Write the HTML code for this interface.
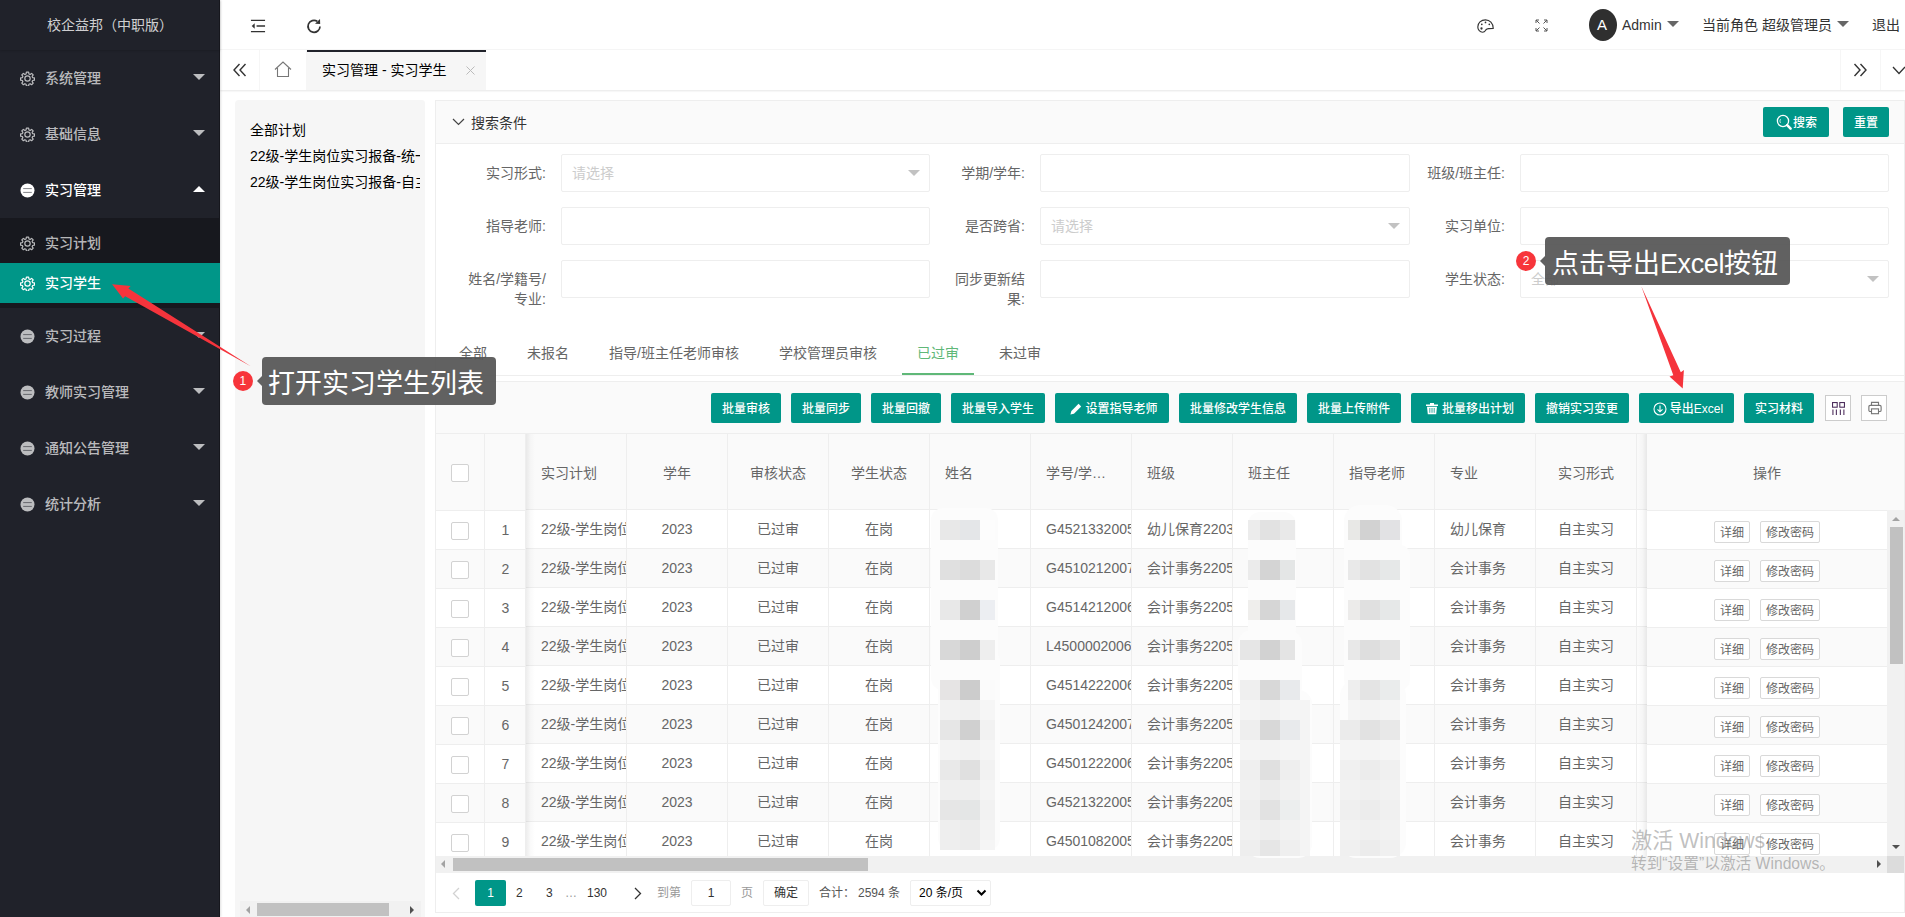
<!DOCTYPE html>
<html lang="zh-CN">
<head>
<meta charset="utf-8">
<title>校企益邦（中职版）</title>
<style>
*{box-sizing:border-box;margin:0;padding:0}
html,body{width:1905px;height:917px;overflow:hidden;background:#fff}
body{font-family:"Liberation Sans","Noto Sans CJK SC",sans-serif;font-size:14px;color:#666;position:relative;line-height:1}
.abs{position:absolute}
svg{display:block}
/* sidebar */
#side{position:absolute;left:0;top:0;width:220px;height:917px;background:#20222a;box-shadow:inset -1px 0 0 rgba(0,0,0,.3),1px 0 2px rgba(0,0,0,.12);z-index:2;color:rgba(255,255,255,.7)}
#logo{position:absolute;left:0;top:0;width:220px;height:50px;line-height:50px;text-align:center;color:rgba(255,255,255,.8);font-size:14px;box-shadow:0 1px 2px 0 rgba(0,0,0,.15)}
.mi{position:absolute;left:0;width:220px;height:56px;line-height:56px;font-size:14px;color:rgba(255,255,255,.7)}
.mi .t{position:absolute;left:45px;top:0;font-weight:500}
.mi svg.ic{position:absolute;left:20px;top:21px}
.mi .car{position:absolute;left:193px;top:24px;width:0;height:0;border:6px solid transparent;border-top-color:rgba(255,255,255,.7);border-bottom-width:0}
.mi.open{color:#fff}
.mi.open .car{border-top-width:0;border-bottom:6px solid #fff;top:24px}
#sub{position:absolute;left:0;top:218px;width:220px;height:90px;background:#17181e}
.si{position:absolute;left:0;width:220px;height:40px;line-height:40px;color:rgba(255,255,255,.7)}
.si .t{position:absolute;left:45px;top:0;font-weight:500}
.si svg.ic{position:absolute;left:20px;top:13px}
.si.on{background:#009688;color:#fff}
/* header */
#hdr{position:absolute;left:220px;top:0;width:1685px;height:50px;background:#fff;border-bottom:1px solid #f6f6f6;color:#333}
#hdr .txt{position:absolute;top:0;line-height:50px;font-size:14px;color:#333;white-space:nowrap}
.dcar{position:absolute;width:0;height:0;border:6px solid transparent;border-top-color:#666;border-bottom-width:0}
/* tab bar */
#tabs{position:absolute;left:220px;top:50px;width:1685px;height:40px;background:#fff;box-shadow:0 1px 2px 0 rgba(0,0,0,.1)}
#tabs .cell{position:absolute;top:0;height:40px;border-right:1px solid #f6f6f6}
#tabs .act{position:absolute;left:87px;top:0;width:179px;height:40px;background:#f6f6f6;border-top:2px solid #20222a;color:#000;line-height:36px;font-size:14px}

/* tree */
#tree{position:absolute;left:235px;top:100px;width:190px;height:830px;background:#f6f6f6;border-radius:4px;overflow:hidden;color:#000}
#tree .n{position:absolute;left:15px;white-space:nowrap;font-size:14px;line-height:26px;color:#000}
/* search panel */
#sp{position:absolute;left:435px;top:100px;width:1470px;height:813px;border:1px solid #eee;background:#fff}
#sph{position:absolute;left:0;top:0;width:1468px;height:43px;background:#fafafa;border-bottom:1px solid #eee;line-height:42px;color:#333}
.btn{position:absolute;height:30px;line-height:32px;background:#009688;color:#fff;font-size:12px;border-radius:2px;text-align:center;white-space:nowrap;font-weight:500}
.lab{position:absolute;width:110px;text-align:right;padding-right:15px;line-height:20px;color:#666;font-size:14px}
.inp{position:absolute;height:38px;border:1px solid #eee;border-radius:2px;background:#fff;line-height:36px;padding-left:10px;color:#ccc;font-size:14px}
.inp i{position:absolute;right:9px;top:15px;width:0;height:0;border:6px solid transparent;border-top-color:#c2c2c2;border-bottom-width:0}
.tb{position:absolute;top:335px;height:40px;line-height:36px;font-size:14px;color:#666;white-space:nowrap}

/* table */
#tv{position:absolute;left:0;top:280px;width:1468px;height:492px;border-top:1px solid #eee;background:#fff}
#tool{position:absolute;left:0;top:0;width:1468px;height:52px;background:#fafafa;border-bottom:1px solid #eee}
#tool .btn{top:11px}
.tib{position:absolute;top:13px;width:26px;height:26px;border:1px solid #ccc;background:#fff}
#th{position:absolute;left:0;top:52px;width:1468px;height:76px;background:#fafafa;border-bottom:1px solid #eee}
.hc{position:absolute;top:0;height:76px;border-right:1px solid #eee;line-height:78px;color:#666;font-size:14px;white-space:nowrap;overflow:hidden}
.row{position:absolute;left:0;width:1452px;height:39px;border-bottom:1px solid #eee;background:#fff}
.row.alt{background:#fafafa}
.c{position:absolute;top:0;height:38px;line-height:38px;border-right:1px solid #eee;color:#666;font-size:14px;white-space:nowrap;overflow:hidden}
.c.ctr,.hc.ctr{text-align:center}
.c.l,.hc.l{padding-left:15px}
.cb{position:absolute;left:15px;width:18px;height:18px;border:1px solid #d2d2d2;border-radius:2px;background:#fff}
.xb{position:absolute;top:10px;height:22px;line-height:22px;border:1px solid #d9d9d9;border-radius:2px;background:#fff;color:#666;font-size:12px;text-align:center}
.mz{position:absolute;background:#fff}
.pg{position:absolute;top:0;line-height:26px;font-size:12px;color:#333;white-space:nowrap}
</style>
</head>
<body>
<div id="side">
<div id="logo">校企益邦（中职版）</div>
<div class="mi" style="top:50px"><svg class="ic" width="15" height="15" viewBox="0 0 24 24" fill="none" stroke="currentColor" stroke-width="1.9" stroke-linejoin="round"><circle cx="12" cy="12" r="4.3"/><path d="M10.2 1.8h3.6l.5 2.9 1.9.8 2.4-1.7 2.5 2.5-1.7 2.4.8 1.9 2.9.5v3.6l-2.9.5-.8 1.9 1.7 2.4-2.5 2.5-2.4-1.7-1.9.8-.5 2.9h-3.6l-.5-2.9-1.9-.8-2.4 1.7-2.5-2.5 1.7-2.4-.8-1.9-2.9-.5v-3.6l2.9-.5.8-1.9-1.7-2.4 2.5-2.5 2.4 1.7 1.9-.8z"/></svg><span class="t">系统管理</span><i class="car"></i></div>
<div class="mi" style="top:106px"><svg class="ic" width="15" height="15" viewBox="0 0 24 24" fill="none" stroke="currentColor" stroke-width="1.9" stroke-linejoin="round"><circle cx="12" cy="12" r="4.3"/><path d="M10.2 1.8h3.6l.5 2.9 1.9.8 2.4-1.7 2.5 2.5-1.7 2.4.8 1.9 2.9.5v3.6l-2.9.5-.8 1.9 1.7 2.4-2.5 2.5-2.4-1.7-1.9.8-.5 2.9h-3.6l-.5-2.9-1.9-.8-2.4 1.7-2.5-2.5 1.7-2.4-.8-1.9-2.9-.5v-3.6l2.9-.5.8-1.9-1.7-2.4 2.5-2.5 2.4 1.7 1.9-.8z"/></svg><span class="t">基础信息</span><i class="car"></i></div>
<div class="mi open" style="top:162px"><svg class="ic" width="15" height="15" viewBox="0 0 15 15"><circle cx="7.5" cy="7.5" r="7" fill="currentColor"/><path d="M3.2 5.6h8.6M3.2 9.4h8.6" stroke="#20222a" stroke-width="1" opacity=".55"/></svg><span class="t">实习管理</span><i class="car"></i></div>
<div class="mi" style="top:308px"><svg class="ic" width="15" height="15" viewBox="0 0 15 15"><circle cx="7.5" cy="7.5" r="7" fill="currentColor"/><path d="M3.2 5.6h8.6M3.2 9.4h8.6" stroke="#20222a" stroke-width="1" opacity=".55"/></svg><span class="t">实习过程</span><i class="car"></i></div>
<div class="mi" style="top:364px"><svg class="ic" width="15" height="15" viewBox="0 0 15 15"><circle cx="7.5" cy="7.5" r="7" fill="currentColor"/><path d="M3.2 5.6h8.6M3.2 9.4h8.6" stroke="#20222a" stroke-width="1" opacity=".55"/></svg><span class="t">教师实习管理</span><i class="car"></i></div>
<div class="mi" style="top:420px"><svg class="ic" width="15" height="15" viewBox="0 0 15 15"><circle cx="7.5" cy="7.5" r="7" fill="currentColor"/><path d="M3.2 5.6h8.6M3.2 9.4h8.6" stroke="#20222a" stroke-width="1" opacity=".55"/></svg><span class="t">通知公告管理</span><i class="car"></i></div>
<div class="mi" style="top:476px"><svg class="ic" width="15" height="15" viewBox="0 0 15 15"><circle cx="7.5" cy="7.5" r="7" fill="currentColor"/><path d="M3.2 5.6h8.6M3.2 9.4h8.6" stroke="#20222a" stroke-width="1" opacity=".55"/></svg><span class="t">统计分析</span><i class="car"></i></div>
<div id="sub"><div class="si" style="top:5px"><svg class="ic" width="15" height="15" viewBox="0 0 24 24" fill="none" stroke="currentColor" stroke-width="1.9" stroke-linejoin="round"><circle cx="12" cy="12" r="4.3"/><path d="M10.2 1.8h3.6l.5 2.9 1.9.8 2.4-1.7 2.5 2.5-1.7 2.4.8 1.9 2.9.5v3.6l-2.9.5-.8 1.9 1.7 2.4-2.5 2.5-2.4-1.7-1.9.8-.5 2.9h-3.6l-.5-2.9-1.9-.8-2.4 1.7-2.5-2.5 1.7-2.4-.8-1.9-2.9-.5v-3.6l2.9-.5.8-1.9-1.7-2.4 2.5-2.5 2.4 1.7 1.9-.8z"/></svg><span class="t">实习计划</span></div><div class="si on" style="top:45px"><svg class="ic" width="15" height="15" viewBox="0 0 24 24" fill="none" stroke="currentColor" stroke-width="1.9" stroke-linejoin="round"><circle cx="12" cy="12" r="4.3"/><path d="M10.2 1.8h3.6l.5 2.9 1.9.8 2.4-1.7 2.5 2.5-1.7 2.4.8 1.9 2.9.5v3.6l-2.9.5-.8 1.9 1.7 2.4-2.5 2.5-2.4-1.7-1.9.8-.5 2.9h-3.6l-.5-2.9-1.9-.8-2.4 1.7-2.5-2.5 1.7-2.4-.8-1.9-2.9-.5v-3.6l2.9-.5.8-1.9-1.7-2.4 2.5-2.5 2.4 1.7 1.9-.8z"/></svg><span class="t">实习学生</span></div></div>
</div>
<div id="hdr">
<svg class="abs" style="left:30px;top:18px" width="16" height="16" viewBox="0 0 17 16" fill="none" stroke="#333" stroke-width="1.45"><path d="M1 2h15M7 8h9M1 14h15"/><path d="M5 5.2L1.8 8 5 10.8z" fill="#333" stroke="none"/></svg>
<svg class="abs" style="left:86px;top:18px" width="16" height="16" viewBox="0 0 16 16" fill="none" stroke="#333" stroke-width="1.7"><path d="M14 8.4A6 6 0 1 1 11.3 3.3"/><path d="M9 5.800l5.200.3-.2-5.200z" fill="#333" stroke="none"/></svg>
<svg class="abs" style="left:1257px;top:19px" width="17" height="14" viewBox="0 0 17 14" fill="none" stroke="#333" stroke-width="1.150"><path d="M16.200 9.300C16.200 4.400 12.700.800 8.500.800 4 .800.800 3.900.800 7.900c0 3 2.200 5.300 4.800 5.300 2.500 0 2.600-1.700 3.600-2.700 1-1 2.800-1.200 7-1.200z"/><circle cx="4.500" cy="9.500" r="1.150" fill="#333" stroke="none"/><circle cx="4.800" cy="5.300" r=".85" fill="#333" stroke="none"/><circle cx="8.500" cy="3.400" r=".85" fill="#333" stroke="none"/><circle cx="12.300" cy="5.300" r=".85" fill="#333" stroke="none"/></svg>
<svg class="abs" style="left:1315px;top:19px" width="13" height="13" viewBox="0 0 13 13" fill="none" stroke="#555" stroke-width="1"><path d="M1 4V1h3M1 1l3.500 3.500M9 1h3v3M12 1L8.500 4.500M1 9v3h3M1 12l3.500-3.500M12 9v3H9M12 12L8.500 8.500"/></svg>
<div class="abs" style="left:1369px;top:9px;width:28px;height:32px;border-radius:50%;background:#2f2f2f;color:#fff;text-align:center;line-height:32px;font-size:15px;padding-right:2px">A</div>
<span class="txt" style="left:1402px">Admin</span><i class="dcar" style="left:1447px;top:21px"></i>
<span class="txt" style="left:1482px">当前角色 超级管理员</span><i class="dcar" style="left:1617px;top:21px"></i>
<span class="txt" style="left:1652px">退出</span>
</div>
<div id="tabs">
<div class="cell" style="left:0;width:40px"></div><div class="cell" style="left:40px;width:47px"></div>
<svg class="abs" style="left:13px;top:13px" width="14" height="14" viewBox="0 0 14 14" fill="none" stroke="#333" stroke-width="1.400"><path d="M6.500 1L1 7l5.500 6M12.500 1L7 7l5.500 6"/></svg>
<svg class="abs" style="left:54px;top:11px" width="18" height="17" viewBox="0 0 18 17" fill="none" stroke="#777" stroke-width="1.100"><path d="M1 8.500L9 1l8 7.500M3.500 7v8.500h11V7"/></svg>
<div class="act"><span class="abs" style="left:15px;top:0;white-space:nowrap">实习管理 - 实习学生</span><svg class="abs" style="left:159px;top:14px" width="9" height="9" viewBox="0 0 9 9" stroke="#bbb" stroke-width="1" fill="none"><path d="M.500.500l8 8M8.500.500l-8 8"/></svg></div>
<div class="abs" style="left:1620px;top:0;width:1px;height:40px;background:#f6f6f6"></div><div class="abs" style="left:1660px;top:0;width:1px;height:40px;background:#f6f6f6"></div>
<svg class="abs" style="left:1633px;top:13px" width="14" height="14" viewBox="0 0 14 14" fill="none" stroke="#333" stroke-width="1.400"><path d="M1.500 1L7 7l-5.500 6M7.500 1L13 7l-5.500 6"/></svg>
<svg class="abs" style="left:1672px;top:16px" width="14" height="9" viewBox="0 0 14 9" fill="none" stroke="#333" stroke-width="1.300"><path d="M1 1l6 6.500L13 1"/></svg>
</div>
<div id="tree">
<div class="n" style="top:17px">全部计划</div><div class="n" style="top:43px">22级-学生岗位实习报备-统一</div><div class="n" style="top:69px">22级-学生岗位实习报备-自主</div><div class="abs" style="left:185px;top:0;width:5px;height:830px;background:#f6f6f6"></div><div class="abs" style="left:5px;top:801px;width:181px;height:17px;background:#f1f1f1"></div><div class="abs" style="left:22px;top:803px;width:132px;height:13px;background:#c1c1c1"></div><div class="abs" style="left:11px;top:806px;width:0;height:0;border:4px solid transparent;border-right:4px solid #a3a3a3;border-left-width:0"></div><div class="abs" style="left:175px;top:806px;width:0;height:0;border:4px solid transparent;border-left:4px solid #505050;border-right-width:0"></div></div>
<div id="sp">
<div id="sph"><svg class="abs" style="left:16px;top:17px" width="13" height="8" viewBox="0 0 13 8" fill="none" stroke="#444" stroke-width="1.200"><path d="M1 1l5.500 5.500L12 1"/></svg><span class="abs" style="left:35px;top:1px;font-size:14px;color:#333">搜索条件</span><div class="btn" style="left:1327px;top:6px;width:66px"><svg class="abs" style="left:13px;top:7px" width="16" height="16" viewBox="0 0 16 16" fill="none" stroke="#fff" stroke-width="1.300"><circle cx="7" cy="7" r="5.600"/><path d="M4.500 8.900a3.300 3.300 0 0 1 0-3.800" stroke-width=".9" opacity=".85"/><path d="M11.200 11.200l3.400 3.400" stroke-width="2.500" stroke-linecap="round"/></svg><span style="padding-left:18px">搜索</span></div><div class="btn" style="left:1407px;top:6px;width:46px">重置</div></div>
<div class="lab" style="left:15px;top:62px">实习形式:</div><div class="inp" style="left:125px;top:53px;width:369px">请选择<i></i></div><div class="lab" style="left:494px;top:62px">学期/学年:</div><div class="inp" style="left:604px;top:53px;width:370px"></div><div class="lab" style="left:974px;top:62px">班级/班主任:</div><div class="inp" style="left:1084px;top:53px;width:369px"></div>
<div class="lab" style="left:15px;top:115px">指导老师:</div><div class="inp" style="left:125px;top:106px;width:369px"></div><div class="lab" style="left:494px;top:115px">是否跨省:</div><div class="inp" style="left:604px;top:106px;width:370px">请选择<i></i></div><div class="lab" style="left:974px;top:115px">实习单位:</div><div class="inp" style="left:1084px;top:106px;width:369px"></div>
<div class="lab" style="left:15px;top:168px">姓名/学籍号/<br>专业:</div><div class="inp" style="left:125px;top:159px;width:369px"></div><div class="lab" style="left:494px;top:168px">同步更新结<br>果:</div><div class="inp" style="left:604px;top:159px;width:370px"></div><div class="lab" style="left:974px;top:168px">学生状态:</div><div class="inp" style="left:1084px;top:159px;width:369px">全部<i></i></div>
<div class="abs" style="left:3px;top:274px;width:1465px;height:1px;background:#eee"></div><span class="tb" style="left:23px;top:234px">全部</span><span class="tb" style="left:91px;top:234px">未报名</span><span class="tb" style="left:173px;top:234px">指导/班主任老师审核</span><span class="tb" style="left:343px;top:234px">学校管理员审核</span><span class="tb" style="left:481px;top:234px;color:#5fb878">已过审</span><span class="tb" style="left:563px;top:234px">未过审</span><div class="abs" style="left:466px;top:272px;width:72px;height:2px;background:#5fb878"></div>
<div id="tv">
<div id="tool"><div class="btn" style="left:275px;width:70px">批量审核</div><div class="btn" style="left:355px;width:70px">批量同步</div><div class="btn" style="left:435px;width:70px">批量回撤</div><div class="btn" style="left:515px;width:94px">批量导入学生</div><div class="btn" style="left:619px;width:114px;padding-left:3px"><svg style="display:inline-block;vertical-align:-3px;margin-right:2px" width="14" height="14" viewBox="0 0 13 13" fill="#fff"><path d="M1.300 11.700l.9-3.300 6.700-6.700 2.400 2.400-6.700 6.700z"/></svg>设置指导老师</div><div class="btn" style="left:743px;width:118px">批量修改学生信息</div><div class="btn" style="left:871px;width:94px">批量上传附件</div><div class="btn" style="left:975px;width:114px;padding-left:3px"><svg style="display:inline-block;vertical-align:-2px;margin-right:3px" width="14" height="13" viewBox="0 0 14 13" fill="#fff"><path d="M1 2.400h12v1.500H1zM5 .9h4v1.500H5zM2 4.700h10l-.8 7.500H2.800z"/><path d="M4.800 6v4.800M7 6v4.800M9.200 6v4.800" stroke="#009688" stroke-width=".8"/></svg>批量移出计划</div><div class="btn" style="left:1099px;width:94px">撤销实习变更</div><div class="btn" style="left:1203px;width:95px;padding-left:3px"><svg style="display:inline-block;vertical-align:-3px;margin-right:3px" width="14" height="14" viewBox="0 0 14 14" fill="none" stroke="#fff" stroke-width="1.100"><circle cx="7" cy="7" r="6"/><path d="M7 3.500v6M4.500 7.300L7 9.800l2.500-2.500"/></svg>导出Excel</div><div class="btn" style="left:1308px;width:70px">实习材料</div><div class="tib" style="left:1389px"><svg class="abs" style="left:6px;top:6px" width="13" height="13" viewBox="0 0 14 14" fill="none" stroke="#4a2a5a" stroke-width="1.150"><rect x=".6" y=".6" width="5" height="5"/><rect x="8.400" y=".6" width="5" height="5"/><path d="M1 8v6M4.700 8v6M9 8v6M12.800 8v6"/></svg></div><div class="tib" style="left:1425px"><svg class="abs" style="left:6px;top:5px" width="14" height="14" viewBox="0 0 16 15" fill="none" stroke="#777" stroke-width="1.300"><path d="M4 4.500V1h8v3.500"/><rect x="1" y="4.500" width="14" height="7" rx="1.500"/><rect x="4" y="8.500" width="8" height="5.500" fill="#fff"/></svg></div></div>
<div id="th"><div class="hc l" style="left:90px;width:101px">实习计划</div><div class="hc ctr" style="left:191px;width:101px">学年</div><div class="hc ctr" style="left:292px;width:101px">审核状态</div><div class="hc ctr" style="left:393px;width:101px">学生状态</div><div class="hc l" style="left:494px;width:101px">姓名</div><div class="hc l" style="left:595px;width:101px">学号/学…</div><div class="hc l" style="left:696px;width:101px">班级</div><div class="hc l" style="left:797px;width:101px">班主任</div><div class="hc l" style="left:898px;width:101px">指导老师</div><div class="hc l" style="left:999px;width:101px">专业</div><div class="hc ctr" style="left:1100px;width:101px">实习形式</div><div class="hc l" style="left:1201px;width:101px"></div></div>
<div class="abs" style="left:0;top:128px;width:1452px;height:346px;overflow:hidden"><div class="row" style="top:0px"><div class="c l" style="left:90px;width:101px">22级-学生岗位实习报备</div><div class="c ctr" style="left:191px;width:101px">2023</div><div class="c ctr" style="left:292px;width:101px">已过审</div><div class="c ctr" style="left:393px;width:101px">在岗</div><div class="c l" style="left:494px;width:101px"></div><div class="c l" style="left:595px;width:101px">G45213320051</div><div class="c l" style="left:696px;width:101px">幼儿保育2203班</div><div class="c l" style="left:797px;width:101px"></div><div class="c l" style="left:898px;width:101px"></div><div class="c l" style="left:999px;width:101px">幼儿保育</div><div class="c ctr" style="left:1100px;width:101px">自主实习</div><div class="c l" style="left:1201px;width:101px"></div></div>
<div class="row alt" style="top:39px"><div class="c l" style="left:90px;width:101px">22级-学生岗位实习报备</div><div class="c ctr" style="left:191px;width:101px">2023</div><div class="c ctr" style="left:292px;width:101px">已过审</div><div class="c ctr" style="left:393px;width:101px">在岗</div><div class="c l" style="left:494px;width:101px"></div><div class="c l" style="left:595px;width:101px">G45102120071</div><div class="c l" style="left:696px;width:101px">会计事务2205班</div><div class="c l" style="left:797px;width:101px"></div><div class="c l" style="left:898px;width:101px"></div><div class="c l" style="left:999px;width:101px">会计事务</div><div class="c ctr" style="left:1100px;width:101px">自主实习</div><div class="c l" style="left:1201px;width:101px"></div></div>
<div class="row" style="top:78px"><div class="c l" style="left:90px;width:101px">22级-学生岗位实习报备</div><div class="c ctr" style="left:191px;width:101px">2023</div><div class="c ctr" style="left:292px;width:101px">已过审</div><div class="c ctr" style="left:393px;width:101px">在岗</div><div class="c l" style="left:494px;width:101px"></div><div class="c l" style="left:595px;width:101px">G45142120061</div><div class="c l" style="left:696px;width:101px">会计事务2205班</div><div class="c l" style="left:797px;width:101px"></div><div class="c l" style="left:898px;width:101px"></div><div class="c l" style="left:999px;width:101px">会计事务</div><div class="c ctr" style="left:1100px;width:101px">自主实习</div><div class="c l" style="left:1201px;width:101px"></div></div>
<div class="row alt" style="top:117px"><div class="c l" style="left:90px;width:101px">22级-学生岗位实习报备</div><div class="c ctr" style="left:191px;width:101px">2023</div><div class="c ctr" style="left:292px;width:101px">已过审</div><div class="c ctr" style="left:393px;width:101px">在岗</div><div class="c l" style="left:494px;width:101px"></div><div class="c l" style="left:595px;width:101px">L45000020061</div><div class="c l" style="left:696px;width:101px">会计事务2205班</div><div class="c l" style="left:797px;width:101px"></div><div class="c l" style="left:898px;width:101px"></div><div class="c l" style="left:999px;width:101px">会计事务</div><div class="c ctr" style="left:1100px;width:101px">自主实习</div><div class="c l" style="left:1201px;width:101px"></div></div>
<div class="row" style="top:156px"><div class="c l" style="left:90px;width:101px">22级-学生岗位实习报备</div><div class="c ctr" style="left:191px;width:101px">2023</div><div class="c ctr" style="left:292px;width:101px">已过审</div><div class="c ctr" style="left:393px;width:101px">在岗</div><div class="c l" style="left:494px;width:101px"></div><div class="c l" style="left:595px;width:101px">G45142220061</div><div class="c l" style="left:696px;width:101px">会计事务2205班</div><div class="c l" style="left:797px;width:101px"></div><div class="c l" style="left:898px;width:101px"></div><div class="c l" style="left:999px;width:101px">会计事务</div><div class="c ctr" style="left:1100px;width:101px">自主实习</div><div class="c l" style="left:1201px;width:101px"></div></div>
<div class="row alt" style="top:195px"><div class="c l" style="left:90px;width:101px">22级-学生岗位实习报备</div><div class="c ctr" style="left:191px;width:101px">2023</div><div class="c ctr" style="left:292px;width:101px">已过审</div><div class="c ctr" style="left:393px;width:101px">在岗</div><div class="c l" style="left:494px;width:101px"></div><div class="c l" style="left:595px;width:101px">G45012420071</div><div class="c l" style="left:696px;width:101px">会计事务2205班</div><div class="c l" style="left:797px;width:101px"></div><div class="c l" style="left:898px;width:101px"></div><div class="c l" style="left:999px;width:101px">会计事务</div><div class="c ctr" style="left:1100px;width:101px">自主实习</div><div class="c l" style="left:1201px;width:101px"></div></div>
<div class="row" style="top:234px"><div class="c l" style="left:90px;width:101px">22级-学生岗位实习报备</div><div class="c ctr" style="left:191px;width:101px">2023</div><div class="c ctr" style="left:292px;width:101px">已过审</div><div class="c ctr" style="left:393px;width:101px">在岗</div><div class="c l" style="left:494px;width:101px"></div><div class="c l" style="left:595px;width:101px">G45012220061</div><div class="c l" style="left:696px;width:101px">会计事务2205班</div><div class="c l" style="left:797px;width:101px"></div><div class="c l" style="left:898px;width:101px"></div><div class="c l" style="left:999px;width:101px">会计事务</div><div class="c ctr" style="left:1100px;width:101px">自主实习</div><div class="c l" style="left:1201px;width:101px"></div></div>
<div class="row alt" style="top:273px"><div class="c l" style="left:90px;width:101px">22级-学生岗位实习报备</div><div class="c ctr" style="left:191px;width:101px">2023</div><div class="c ctr" style="left:292px;width:101px">已过审</div><div class="c ctr" style="left:393px;width:101px">在岗</div><div class="c l" style="left:494px;width:101px"></div><div class="c l" style="left:595px;width:101px">G45213220051</div><div class="c l" style="left:696px;width:101px">会计事务2205班</div><div class="c l" style="left:797px;width:101px"></div><div class="c l" style="left:898px;width:101px"></div><div class="c l" style="left:999px;width:101px">会计事务</div><div class="c ctr" style="left:1100px;width:101px">自主实习</div><div class="c l" style="left:1201px;width:101px"></div></div>
<div class="row" style="top:312px"><div class="c l" style="left:90px;width:101px">22级-学生岗位实习报备</div><div class="c ctr" style="left:191px;width:101px">2023</div><div class="c ctr" style="left:292px;width:101px">已过审</div><div class="c ctr" style="left:393px;width:101px">在岗</div><div class="c l" style="left:494px;width:101px"></div><div class="c l" style="left:595px;width:101px">G45010820051</div><div class="c l" style="left:696px;width:101px">会计事务2205班</div><div class="c l" style="left:797px;width:101px"></div><div class="c l" style="left:898px;width:101px"></div><div class="c l" style="left:999px;width:101px">会计事务</div><div class="c ctr" style="left:1100px;width:101px">自主实习</div><div class="c l" style="left:1201px;width:101px"></div></div>
</div>
<div class="abs" style="left:90px;top:52px;width:9px;height:422px;background:linear-gradient(90deg,rgba(0,0,0,.07),rgba(0,0,0,.02) 50%,rgba(0,0,0,0))"></div><div class="abs" style="left:1202px;top:52px;width:9px;height:422px;background:linear-gradient(270deg,rgba(0,0,0,.075),rgba(0,0,0,.02) 50%,rgba(0,0,0,0))"></div><div class="abs" style="left:0;top:52px;width:90px;height:422px;overflow:hidden"><div class="abs" style="left:0;top:0;width:90px;height:77px;background:#fafafa;border-bottom:1px solid #eee"><div class="hc" style="left:0;width:49px;height:76px"><div class="cb" style="top:30px"></div></div><div class="hc" style="left:49px;width:41px;height:76px"></div></div><div class="row" style="top:77px;width:90px"><div class="c" style="left:0;width:49px"><div class="cb" style="top:11px"></div></div><div class="c ctr" style="left:49px;width:41px;padding-left:1px">1</div></div><div class="row alt" style="top:116px;width:90px"><div class="c" style="left:0;width:49px"><div class="cb" style="top:11px"></div></div><div class="c ctr" style="left:49px;width:41px;padding-left:1px">2</div></div><div class="row" style="top:155px;width:90px"><div class="c" style="left:0;width:49px"><div class="cb" style="top:11px"></div></div><div class="c ctr" style="left:49px;width:41px;padding-left:1px">3</div></div><div class="row alt" style="top:194px;width:90px"><div class="c" style="left:0;width:49px"><div class="cb" style="top:11px"></div></div><div class="c ctr" style="left:49px;width:41px;padding-left:1px">4</div></div><div class="row" style="top:233px;width:90px"><div class="c" style="left:0;width:49px"><div class="cb" style="top:11px"></div></div><div class="c ctr" style="left:49px;width:41px;padding-left:1px">5</div></div><div class="row alt" style="top:272px;width:90px"><div class="c" style="left:0;width:49px"><div class="cb" style="top:11px"></div></div><div class="c ctr" style="left:49px;width:41px;padding-left:1px">6</div></div><div class="row" style="top:311px;width:90px"><div class="c" style="left:0;width:49px"><div class="cb" style="top:11px"></div></div><div class="c ctr" style="left:49px;width:41px;padding-left:1px">7</div></div><div class="row alt" style="top:350px;width:90px"><div class="c" style="left:0;width:49px"><div class="cb" style="top:11px"></div></div><div class="c ctr" style="left:49px;width:41px;padding-left:1px">8</div></div><div class="row" style="top:389px;width:90px"><div class="c" style="left:0;width:49px"><div class="cb" style="top:11px"></div></div><div class="c ctr" style="left:49px;width:41px;padding-left:1px">9</div></div></div>
<div class="abs" style="left:1211px;top:52px;width:257px;height:422px;overflow:hidden"><div class="abs" style="left:0;top:0;width:257px;height:77px;background:#fafafa;border-bottom:1px solid #eee;line-height:78px;text-align:center;color:#666"><span class="abs" style="left:0;width:240px;top:0">操作</span></div><div class="row" style="top:77px;width:240px"><span class="xb" style="left:67px;width:36px">详细</span><span class="xb" style="left:113px;width:60px">修改密码</span></div><div class="row alt" style="top:116px;width:240px"><span class="xb" style="left:67px;width:36px">详细</span><span class="xb" style="left:113px;width:60px">修改密码</span></div><div class="row" style="top:155px;width:240px"><span class="xb" style="left:67px;width:36px">详细</span><span class="xb" style="left:113px;width:60px">修改密码</span></div><div class="row alt" style="top:194px;width:240px"><span class="xb" style="left:67px;width:36px">详细</span><span class="xb" style="left:113px;width:60px">修改密码</span></div><div class="row" style="top:233px;width:240px"><span class="xb" style="left:67px;width:36px">详细</span><span class="xb" style="left:113px;width:60px">修改密码</span></div><div class="row alt" style="top:272px;width:240px"><span class="xb" style="left:67px;width:36px">详细</span><span class="xb" style="left:113px;width:60px">修改密码</span></div><div class="row" style="top:311px;width:240px"><span class="xb" style="left:67px;width:36px">详细</span><span class="xb" style="left:113px;width:60px">修改密码</span></div><div class="row alt" style="top:350px;width:240px"><span class="xb" style="left:67px;width:36px">详细</span><span class="xb" style="left:113px;width:60px">修改密码</span></div><div class="row" style="top:389px;width:240px"><span class="xb" style="left:67px;width:36px">详细</span><span class="xb" style="left:113px;width:60px">修改密码</span></div></div>
<div class="abs" style="left:1451px;top:128px;width:17px;height:346px;background:#f1f1f1"></div><div class="abs" style="left:1454px;top:145px;width:13px;height:137px;background:#c1c1c1"></div><div class="abs" style="left:1456px;top:135px;width:0;height:0;border:4px solid transparent;border-bottom:4px solid #a3a3a3;border-top-width:0"></div><div class="abs" style="left:1456px;top:463px;width:0;height:0;border:4px solid transparent;border-top:4px solid #505050;border-bottom-width:0"></div><div class="abs" style="left:0;top:474px;width:1451px;height:17px;background:#f1f1f1"></div><div class="abs" style="left:1451px;top:474px;width:17px;height:17px;background:#dcdcdc"></div><div class="abs" style="left:17px;top:476px;width:415px;height:13px;background:#c1c1c1"></div><div class="abs" style="left:5px;top:478px;width:0;height:0;border:4px solid transparent;border-right:4px solid #a3a3a3;border-left-width:0"></div><div class="abs" style="left:1441px;top:478px;width:0;height:0;border:4px solid transparent;border-left:4px solid #505050;border-right-width:0"></div></div>
<div class="abs" style="left:0;top:779px;width:1468px;height:26px"><svg class="abs" style="left:16px;top:7px" width="8" height="13" viewBox="0 0 8 13" fill="none" stroke="#d2d2d2" stroke-width="1.300"><path d="M7 1L1.500 6.500 7 12"/></svg><div class="pg" style="left:39px;width:31px;background:#009688;color:#fff;text-align:center;border-radius:2px">1</div><span class="pg" style="left:80px">2</span><span class="pg" style="left:110px">3</span><span class="pg" style="left:129px;color:#999">…</span><span class="pg" style="left:151px">130</span><svg class="abs" style="left:198px;top:7px" width="8" height="13" viewBox="0 0 8 13" fill="none" stroke="#333" stroke-width="1.300"><path d="M1 1l5.500 5.500L1 12"/></svg><span class="pg" style="left:221px;color:#999">到第</span><div class="pg" style="left:255px;width:40px;height:26px;border:1px solid #eee;border-radius:2px;text-align:center;line-height:24px">1</div><span class="pg" style="left:305px;color:#999">页</span><div class="pg" style="left:327px;width:46px;height:26px;border:1px solid #eee;border-radius:2px;text-align:center;line-height:24px">确定</div><span class="pg" style="left:383px;color:#555">合计：<span style="margin-left:3px">2594 条</span></span><div class="pg" style="left:474px;width:81px;height:26px;border:1px solid #eee;border-radius:2px;line-height:24px;padding-left:8px;font-size:12px;color:#000">20 条/页<svg class="abs" style="left:65px;top:8px" width="11" height="8" viewBox="0 0 11 8" fill="none" stroke="#000" stroke-width="2"><path d="M1.500 1.500l4 4 4-4"/></svg></div></div>
</div>
<div id="mosaic"><div class="mz" style="left:931px;top:508px;width:67px;height:182px;border-radius:12px;background:#fcfcfc"></div><div class="mz" style="left:938px;top:650px;width:62px;height:200px;border-radius:12px;background:#fcfcfc"></div><div class="mz" style="left:940px;top:520px;width:20px;height:20px;background:#e8e8e8"></div><div class="mz" style="left:960px;top:520px;width:20px;height:20px;background:#e4e6e8"></div><div class="mz" style="left:980px;top:520px;width:15px;height:20px;background:#fdfdfd"></div><div class="mz" style="left:940px;top:560px;width:20px;height:20px;background:#e0e0e0"></div><div class="mz" style="left:960px;top:560px;width:20px;height:20px;background:#dcdcdc"></div><div class="mz" style="left:980px;top:560px;width:15px;height:20px;background:#e8e8e8"></div><div class="mz" style="left:940px;top:600px;width:20px;height:20px;background:#e8e8e8"></div><div class="mz" style="left:960px;top:600px;width:20px;height:20px;background:#d0d0d0"></div><div class="mz" style="left:980px;top:600px;width:15px;height:20px;background:#eceef2"></div><div class="mz" style="left:940px;top:640px;width:20px;height:20px;background:#d8d8d8"></div><div class="mz" style="left:960px;top:640px;width:20px;height:20px;background:#cecece"></div><div class="mz" style="left:980px;top:640px;width:15px;height:20px;background:#eeeeee"></div><div class="mz" style="left:940px;top:680px;width:20px;height:20px;background:#e6e4e4"></div><div class="mz" style="left:960px;top:680px;width:20px;height:20px;background:#cccccc"></div><div class="mz" style="left:980px;top:680px;width:15px;height:20px;background:#fbfbfb"></div><div class="mz" style="left:940px;top:700px;width:20px;height:20px;background:#f2f2f2"></div><div class="mz" style="left:960px;top:700px;width:20px;height:20px;background:#f0f0f0"></div><div class="mz" style="left:980px;top:700px;width:15px;height:20px;background:#f6f6f6"></div><div class="mz" style="left:940px;top:720px;width:20px;height:20px;background:#e6e6e6"></div><div class="mz" style="left:960px;top:720px;width:20px;height:20px;background:#d0d0d0"></div><div class="mz" style="left:980px;top:720px;width:15px;height:20px;background:#f2f2f2"></div><div class="mz" style="left:940px;top:740px;width:20px;height:20px;background:#f3f3f3"></div><div class="mz" style="left:960px;top:740px;width:20px;height:20px;background:#f2f2f2"></div><div class="mz" style="left:980px;top:740px;width:15px;height:20px;background:#f5f5f5"></div><div class="mz" style="left:940px;top:760px;width:20px;height:20px;background:#e9e9e9"></div><div class="mz" style="left:960px;top:760px;width:20px;height:20px;background:#e0e0e0"></div><div class="mz" style="left:980px;top:760px;width:15px;height:20px;background:#f2f2f2"></div><div class="mz" style="left:940px;top:780px;width:20px;height:20px;background:#efefef"></div><div class="mz" style="left:960px;top:780px;width:20px;height:20px;background:#efefef"></div><div class="mz" style="left:980px;top:780px;width:15px;height:20px;background:#f4f4f4"></div><div class="mz" style="left:940px;top:800px;width:20px;height:20px;background:#e6e6e6"></div><div class="mz" style="left:960px;top:800px;width:20px;height:20px;background:#e4e6e6"></div><div class="mz" style="left:980px;top:800px;width:15px;height:20px;background:#f2f2f2"></div><div class="mz" style="left:940px;top:820px;width:20px;height:20px;background:#eeeeee"></div><div class="mz" style="left:960px;top:820px;width:20px;height:20px;background:#ececec"></div><div class="mz" style="left:980px;top:820px;width:15px;height:20px;background:#f3f3f3"></div><div class="mz" style="left:940px;top:840px;width:20px;height:10px;background:#eeeeee"></div><div class="mz" style="left:960px;top:840px;width:20px;height:10px;background:#ececec"></div><div class="mz" style="left:980px;top:840px;width:15px;height:10px;background:#f5f5f5"></div><div class="mz" style="left:1248px;top:512px;width:48px;height:128px;border-radius:12px;background:#fcfcfc"></div><div class="mz" style="left:1238px;top:630px;width:64px;height:70px;border-radius:14px;background:#fcfcfc"></div><div class="mz" style="left:1246px;top:690px;width:66px;height:168px;border-radius:14px;background:#fcfcfc"></div><div class="mz" style="left:1248px;top:520px;width:12px;height:20px;background:#ececec"></div><div class="mz" style="left:1260px;top:520px;width:20px;height:20px;background:#e2e2e2"></div><div class="mz" style="left:1280px;top:520px;width:15px;height:20px;background:#e9e9e9"></div><div class="mz" style="left:1248px;top:560px;width:12px;height:20px;background:#ebebeb"></div><div class="mz" style="left:1260px;top:560px;width:20px;height:20px;background:#d4d4d4"></div><div class="mz" style="left:1280px;top:560px;width:15px;height:20px;background:#e4e6e6"></div><div class="mz" style="left:1248px;top:600px;width:12px;height:20px;background:#efeeec"></div><div class="mz" style="left:1260px;top:600px;width:20px;height:20px;background:#d6d6d6"></div><div class="mz" style="left:1280px;top:600px;width:15px;height:20px;background:#e6e8ea"></div><div class="mz" style="left:1240px;top:640px;width:20px;height:20px;background:#e6e6e6"></div><div class="mz" style="left:1260px;top:640px;width:20px;height:20px;background:#d2d2d2"></div><div class="mz" style="left:1280px;top:640px;width:15px;height:20px;background:#e4e4e4"></div><div class="mz" style="left:1240px;top:680px;width:20px;height:20px;background:#efefef"></div><div class="mz" style="left:1260px;top:680px;width:20px;height:20px;background:#d8d8d8"></div><div class="mz" style="left:1280px;top:680px;width:20px;height:20px;background:#e8eaec"></div><div class="mz" style="left:1240px;top:700px;width:20px;height:20px;background:#f4f4f4"></div><div class="mz" style="left:1260px;top:700px;width:20px;height:20px;background:#f2f2f2"></div><div class="mz" style="left:1280px;top:700px;width:20px;height:20px;background:#f5f5f5"></div><div class="mz" style="left:1300px;top:700px;width:10px;height:20px;background:#f4f4f4"></div><div class="mz" style="left:1240px;top:720px;width:20px;height:20px;background:#eeeeee"></div><div class="mz" style="left:1260px;top:720px;width:20px;height:20px;background:#d8d8d8"></div><div class="mz" style="left:1280px;top:720px;width:20px;height:20px;background:#e8eaec"></div><div class="mz" style="left:1300px;top:720px;width:10px;height:20px;background:#f4f4f4"></div><div class="mz" style="left:1240px;top:740px;width:20px;height:20px;background:#f4f4f4"></div><div class="mz" style="left:1260px;top:740px;width:20px;height:20px;background:#f3f3f3"></div><div class="mz" style="left:1280px;top:740px;width:20px;height:20px;background:#f5f5f5"></div><div class="mz" style="left:1300px;top:740px;width:10px;height:20px;background:#f4f4f4"></div><div class="mz" style="left:1240px;top:760px;width:20px;height:20px;background:#efefef"></div><div class="mz" style="left:1260px;top:760px;width:20px;height:20px;background:#e0e0e0"></div><div class="mz" style="left:1280px;top:760px;width:20px;height:20px;background:#eeeeee"></div><div class="mz" style="left:1300px;top:760px;width:10px;height:20px;background:#f4f4f4"></div><div class="mz" style="left:1240px;top:780px;width:20px;height:20px;background:#f1f1f1"></div><div class="mz" style="left:1260px;top:780px;width:20px;height:20px;background:#ececec"></div><div class="mz" style="left:1280px;top:780px;width:20px;height:20px;background:#f1f1f1"></div><div class="mz" style="left:1300px;top:780px;width:10px;height:20px;background:#f4f4f4"></div><div class="mz" style="left:1240px;top:800px;width:20px;height:20px;background:#eeeeee"></div><div class="mz" style="left:1260px;top:800px;width:20px;height:20px;background:#e2e2e2"></div><div class="mz" style="left:1280px;top:800px;width:20px;height:20px;background:#eceeee"></div><div class="mz" style="left:1300px;top:800px;width:10px;height:20px;background:#f4f4f4"></div><div class="mz" style="left:1240px;top:820px;width:20px;height:20px;background:#f1f1f1"></div><div class="mz" style="left:1260px;top:820px;width:20px;height:20px;background:#eeeeee"></div><div class="mz" style="left:1280px;top:820px;width:20px;height:20px;background:#f2f2f2"></div><div class="mz" style="left:1300px;top:820px;width:10px;height:20px;background:#f4f4f4"></div><div class="mz" style="left:1240px;top:840px;width:20px;height:16px;background:#eeeeee"></div><div class="mz" style="left:1260px;top:840px;width:20px;height:16px;background:#e6e6e6"></div><div class="mz" style="left:1280px;top:840px;width:20px;height:16px;background:#efefef"></div><div class="mz" style="left:1300px;top:840px;width:10px;height:16px;background:#f4f4f4"></div><div class="mz" style="left:1344px;top:505px;width:58px;height:135px;border-radius:16px;background:#fcfcfc"></div><div class="mz" style="left:1344px;top:545px;width:66px;height:145px;border-radius:10px;background:#fcfcfc"></div><div class="mz" style="left:1340px;top:680px;width:66px;height:178px;border-radius:16px;background:#fcfcfc"></div><div class="mz" style="left:1348px;top:520px;width:12px;height:20px;background:#e8e8e6"></div><div class="mz" style="left:1360px;top:520px;width:20px;height:20px;background:#d2d2d2"></div><div class="mz" style="left:1380px;top:520px;width:20px;height:20px;background:#e2e2e4"></div><div class="mz" style="left:1348px;top:560px;width:12px;height:20px;background:#e9e9e9"></div><div class="mz" style="left:1360px;top:560px;width:20px;height:20px;background:#e2e2e2"></div><div class="mz" style="left:1380px;top:560px;width:20px;height:20px;background:#e6e8e8"></div><div class="mz" style="left:1348px;top:600px;width:12px;height:20px;background:#ecebea"></div><div class="mz" style="left:1360px;top:600px;width:20px;height:20px;background:#e0e0e0"></div><div class="mz" style="left:1380px;top:600px;width:20px;height:20px;background:#e6e8e8"></div><div class="mz" style="left:1348px;top:640px;width:12px;height:20px;background:#e8e8e8"></div><div class="mz" style="left:1360px;top:640px;width:20px;height:20px;background:#dedede"></div><div class="mz" style="left:1380px;top:640px;width:20px;height:20px;background:#e4e4e4"></div><div class="mz" style="left:1348px;top:680px;width:12px;height:20px;background:#eeeeee"></div><div class="mz" style="left:1360px;top:680px;width:20px;height:20px;background:#e4e4e4"></div><div class="mz" style="left:1380px;top:680px;width:20px;height:20px;background:#eaecec"></div><div class="mz" style="left:1348px;top:700px;width:12px;height:20px;background:#f5f5f5"></div><div class="mz" style="left:1360px;top:700px;width:20px;height:20px;background:#f3f3f3"></div><div class="mz" style="left:1380px;top:700px;width:20px;height:20px;background:#f5f5f5"></div><div class="mz" style="left:1340px;top:720px;width:20px;height:20px;background:#ebebeb"></div><div class="mz" style="left:1360px;top:720px;width:20px;height:20px;background:#e2e2e2"></div><div class="mz" style="left:1380px;top:720px;width:20px;height:20px;background:#e8e8e8"></div><div class="mz" style="left:1340px;top:740px;width:20px;height:20px;background:#f5f5f5"></div><div class="mz" style="left:1360px;top:740px;width:20px;height:20px;background:#f4f4f4"></div><div class="mz" style="left:1380px;top:740px;width:20px;height:20px;background:#f6f6f6"></div><div class="mz" style="left:1340px;top:760px;width:20px;height:20px;background:#f0f0f0"></div><div class="mz" style="left:1360px;top:760px;width:20px;height:20px;background:#ececec"></div><div class="mz" style="left:1380px;top:760px;width:20px;height:20px;background:#f0f0f0"></div><div class="mz" style="left:1340px;top:780px;width:20px;height:20px;background:#f2f2f2"></div><div class="mz" style="left:1360px;top:780px;width:20px;height:20px;background:#f0f0f0"></div><div class="mz" style="left:1380px;top:780px;width:20px;height:20px;background:#f2f2f2"></div><div class="mz" style="left:1340px;top:800px;width:20px;height:20px;background:#efefef"></div><div class="mz" style="left:1360px;top:800px;width:20px;height:20px;background:#ececec"></div><div class="mz" style="left:1380px;top:800px;width:20px;height:20px;background:#f0f0f0"></div><div class="mz" style="left:1340px;top:820px;width:20px;height:20px;background:#f2f2f2"></div><div class="mz" style="left:1360px;top:820px;width:20px;height:20px;background:#f0f0f0"></div><div class="mz" style="left:1380px;top:820px;width:20px;height:20px;background:#f2f2f2"></div><div class="mz" style="left:1340px;top:840px;width:20px;height:16px;background:#f0f0f0"></div><div class="mz" style="left:1360px;top:840px;width:20px;height:16px;background:#ececec"></div><div class="mz" style="left:1380px;top:840px;width:20px;height:16px;background:#f0f0f0"></div></div>
<div class="abs" style="left:1631px;top:828px;font-size:21.200px;line-height:26px;color:rgba(140,140,140,.55);white-space:nowrap">激活 Windows</div><div class="abs" style="left:1631px;top:855px;font-size:15.700px;line-height:18px;color:rgba(140,140,140,.6);white-space:nowrap">转到“设置”以激活 Windows。</div>
<svg class="abs" style="left:0;top:0;pointer-events:none;z-index:5" width="1905" height="917" viewBox="0 0 1905 917"><polygon points="251.100,366.600 128.400,288.600 130.600,285.900 112.100,284.300 123,298.400 125.200,296.300" fill="#f5343c"/><polygon points="1641.300,286.300 1680.800,372.200 1683.900,370.100 1682.700,388.500 1669.500,376.600 1673.300,375.300" fill="#f5343c"/><circle cx="243" cy="381" r="10" fill="#f7353b"/><circle cx="1526" cy="261" r="10" fill="#f7353b"/><text x="242.800" y="385.300" font-size="12" fill="#fff" text-anchor="middle" font-family="Liberation Sans, sans-serif">1</text><text x="1526" y="265.300" font-size="12" fill="#fff" text-anchor="middle" font-family="Liberation Sans, sans-serif">2</text></svg>
<div class="abs" style="z-index:6;left:262px;top:357px;width:234px;height:48px;background:rgba(84,84,84,.92);border-radius:4px;color:#fff;font-size:27px;line-height:48px;white-space:nowrap"><span class="abs" style="left:6px;top:3px">打开实习学生列表</span><i class="abs" style="left:-5px;top:19px;width:0;height:0;border:5px solid transparent;border-right:5px solid rgba(84,84,84,.92);border-left-width:0"></i></div>
<div class="abs" style="z-index:6;left:1545px;top:237px;width:245px;height:48px;background:rgba(84,84,84,.92);border-radius:4px;color:#fff;font-size:27px;line-height:48px;white-space:nowrap"><span class="abs" style="left:7px;top:3px">点击导出<span style="letter-spacing:-.4px">Excel</span>按钮</span><i class="abs" style="left:-5px;top:19px;width:0;height:0;border:5px solid transparent;border-right:5px solid rgba(84,84,84,.92);border-left-width:0"></i></div>
</body>
</html>
